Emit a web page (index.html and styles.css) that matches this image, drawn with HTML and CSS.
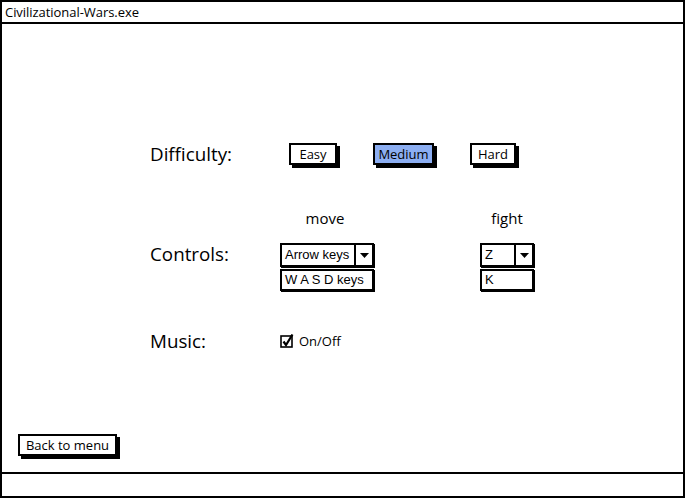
FILE: index.html
```html
<!DOCTYPE html>
<html>
<head>
<meta charset="utf-8">
<link rel="stylesheet" href="styles.css">
</head>
<body>
<div class="window">
  <div class="titlebar">Civilizational-Wars.exe</div>
  <div class="content">
    <div class="settings">
      <div class="row difficulty">
        <div class="label">Difficulty:</div>
        <div class="btn easy">Easy</div>
        <div class="btn medium selected">Medium</div>
        <div class="btn hard">Hard</div>
      </div>
      <div class="row heads">
        <div class="label"></div>
        <div class="head move">move</div>
        <div class="head fight">fight</div>
      </div>
      <div class="row controls">
        <div class="label">Controls:</div>
        <div class="col move">
          <div class="combo"><span class="val">Arrow keys</span><span class="arrow"><svg width="9" height="5" viewBox="0 0 9 5"><path d="M0 0H9L4.5 5Z" fill="#000"/></svg></span></div>
          <div class="field">W A S D keys</div>
        </div>
        <div class="col fight">
          <div class="combo"><span class="val">Z</span><span class="arrow"><svg width="9" height="5" viewBox="0 0 9 5"><path d="M0 0H9L4.5 5Z" fill="#000"/></svg></span></div>
          <div class="field">K</div>
        </div>
      </div>
      <div class="row music">
        <div class="label">Music:</div>
        <div class="check">
          <svg width="14" height="14" viewBox="0 0 14 14"><rect x="1" y="2" width="11" height="11" fill="#fff" stroke="#000" stroke-width="1.6"/><path d="M3.5 7.5L6 11L12.5 0.5" fill="none" stroke="#000" stroke-width="2.2"/></svg>
          <span>On/Off</span>
        </div>
      </div>
    </div>
    <div class="btn back">Back to menu</div>
  </div>
  <div class="statusbar"></div>
</div>
</body>
</html>
```

FILE: styles.css
```css
html, body {
  margin: 0;
  padding: 0;
  background: #fff;
}
body {
  font-family: "Open Sans", "Noto Sans", sans-serif;
  color: #000;
}
.window {
  box-sizing: border-box;
  width: 685px;
  height: 498px;
  border: 2px solid #000;
  display: flex;
  flex-direction: column;
}
.titlebar {
  height: 20px;
  border-bottom: 2px solid #000;
  font-size: 13px;
  line-height: 20px;
  padding-left: 3px;
  letter-spacing: -0.05px;
}
.content {
  flex: 1;
  display: flex;
  flex-direction: column;
  padding-left: 16px;
}
.settings {
  margin-left: 132px;
  margin-top: 117px;
  display: flex;
  flex-direction: column;
}
.row {
  display: flex;
  align-items: center;
}
.label {
  width: 130px;
  font-size: 18.8px;
  flex: none;
}
.btn {
  box-sizing: border-box;
  height: 22px;
  border: 2px solid #000;
  box-shadow: 3px 3px 0 #000;
  font-size: 13px;
  line-height: 18px;
  text-align: center;
  background: #fff;
}
.easy { margin-left: 9px; width: 48px; }
.medium { margin-left: 36px; width: 61px; }
.hard { margin-left: 36px; width: 46px; }
.selected { background: #8caef2; }
.heads {
  margin-top: 43px;
  height: 16px;
}
.head {
  font-size: 15px;
  text-align: center;
}
.head.move { width: 90px; }
.head.fight { width: 54px; margin-left: 110px; }
.controls {
  margin-top: 17px;
  align-items: flex-start;
}
.controls .label {
  line-height: 22px;
}
.col {
  display: flex;
  flex-direction: column;
  gap: 2px;
}
.col.move { width: 94px; }
.col.fight { width: 54px; margin-left: 106px; }
.combo, .field {
  box-sizing: border-box;
  border: 2px solid #000;
  box-shadow: 1px 1px 0 #000;
  font-family: "Liberation Sans", Arial, sans-serif;
  font-size: 13px;
  background: #fff;
}
.combo {
  height: 24px;
  display: flex;
}
.combo .val {
  flex: 1;
  line-height: 20px;
  padding-left: 3px;
}
.combo .arrow {
  width: 16px;
  border-left: 2px solid #000;
  display: flex;
  align-items: center;
  justify-content: center;
}
.field {
  height: 22px;
  line-height: 18px;
  padding-left: 3px;
}
.music {
  margin-top: 42px;
  height: 16px;
}
.check {
  display: flex;
  align-items: center;
  gap: 5px;
  font-size: 13px;
}
.check svg { display: block; }
.back {
  margin-top: auto;
  margin-bottom: 16px;
  margin-left: 0;
  width: 99px;
  font-size: 13px;
}
.statusbar {
  height: 22px;
  border-top: 2px solid #000;
}
```
